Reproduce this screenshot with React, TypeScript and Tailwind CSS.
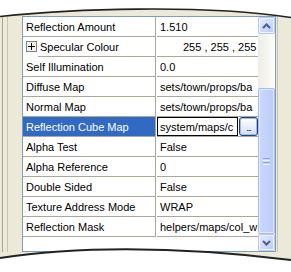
import React from "react";

const rows: { name: string; value: string; plus?: boolean; selected?: boolean; indent?: number }[] = [
  { name: "Reflection Amount", value: "1.510" },
  { name: "Specular Colour", value: "255 , 255 , 255", plus: true, indent: 15 },
  { name: "Self Illumination", value: "0.0" },
  { name: "Diffuse Map", value: "sets/town/props/ba" },
  { name: "Normal Map", value: "sets/town/props/ba" },
  { name: "Reflection Cube Map", value: "system/maps/c", selected: true },
  { name: "Alpha Test", value: "False" },
  { name: "Alpha Reference", value: "0" },
  { name: "Double Sided", value: "False" },
  { name: "Texture Address Mode", value: "WRAP" },
  { name: "Reflection Mask", value: "helpers/maps/col_w" },
];

function Row({ r }: { r: (typeof rows)[number] }) {
  return (
    <div className="flex h-[20px]">
      <div className="flex w-[133px] flex-col border-r border-[#ACA899]">
        <div
          className={
            "flex h-[19px] items-center overflow-hidden whitespace-nowrap pl-[3px] " +
            (r.selected ? "bg-[#316AC5] text-white" : "text-black")
          }
        >
          {r.plus && (
            <div className="mr-[3px] flex h-[11px] w-[11px] shrink-0 items-center justify-center border border-[#808080] bg-[#F4F2E8]">
              <svg width="9" height="9" viewBox="0 0 9 9">
                <path d="M1 4.5H8M4.5 1V8" stroke="#000" strokeWidth="1" shapeRendering="crispEdges" />
              </svg>
            </div>
          )}
          <span className="pt-[2px] leading-[17px]">{r.name}</span>
        </div>
        <div className="flex h-[1px]">
          <div className="h-[1px]" style={{ width: r.indent ?? 0 }} />
          <div className="h-[1px] flex-1 bg-[#ACA899]" />
        </div>
      </div>
      <div className="ml-[1px] flex min-w-0 flex-1 flex-col">
        {r.selected ? (
          <div className="flex h-[19px]">
            <div className="flex w-[81px] items-center overflow-hidden border border-black pl-[2px]">
              <span className="block w-full overflow-hidden whitespace-nowrap pt-[1px] leading-[17px]">{r.value}</span>
            </div>
            <div className="ml-[1px] flex h-[19px] w-[19px] items-end justify-center overflow-hidden rounded-[3px] border border-[#1F3F8C] bg-gradient-to-b from-[#FFFFFF] to-[#D3DEF4] shadow-[inset_0_0_0_1px_#9DBAE8]">
              <span className="pb-[3px] text-[9px] leading-[8px] tracking-[-1px] text-black">...</span>
            </div>
          </div>
        ) : (
          <div
            className={
              "flex h-[19px] items-center overflow-hidden whitespace-nowrap " +
              (r.plus ? "pl-[26px]" : "pl-[3px]")
            }
          >
            <span className="pt-[2px] leading-[17px]">{r.value}</span>
          </div>
        )}
        <div className="h-[1px] bg-[#ACA899]" />
      </div>
    </div>
  );
}

function Chevron({ up }: { up: boolean }) {
  return (
    <svg width="9" height="6" viewBox="0 0 9 6">
      <path
        d={up ? "M1 5L4.5 1.5L8 5" : "M1 1L4.5 4.5L8 1"}
        fill="none"
        stroke="#4D6185"
        strokeWidth="2"
      />
    </svg>
  );
}

function ScrollButton({ up }: { up: boolean }) {
  return (
    <div className="flex h-[17px] w-[17px] shrink-0 items-center justify-center rounded-[2px] border border-[#B4C8F6] bg-gradient-to-br from-[#E4ECFE] to-[#B9CBF6] shadow-[inset_0_0_0_1px_#F2F6FF]">
      <Chevron up={up} />
    </div>
  );
}

export default function App() {
  return (
    <div
      className="relative h-[272px] w-[291px] overflow-hidden bg-white text-[11px] text-black"
      style={{ fontFamily: '"Liberation Sans", Arial, sans-serif' }}
    >
      <div className="flex h-full bg-[#ECE9D8] pt-[16px] pb-[20px]">
        <div className="flex w-[22px] shrink-0">
          <div className="ml-[2px] w-[1px] bg-[#A8A596]" />
          <div className="ml-[4px] w-[1px] bg-[#C8C5B4]" />
        </div>
        <div className="flex h-[236px] w-[254px] shrink-0 border border-[#7F9DB9] bg-white">
          <div className="flex w-[235px] flex-col">
            {rows.map((r) => (
              <Row key={r.name} r={r} />
            ))}
          </div>
          <div className="flex w-[17px] flex-col bg-gradient-to-r from-[#EEEDE5] to-[#FDFDFA]">
            <ScrollButton up />
            <div className="h-[54px]" />
            <div className="flex h-[146px] items-center justify-center rounded-[2px] border border-[#A9BDF0] bg-gradient-to-r from-[#CAD8FC] to-[#BACCF8] shadow-[inset_0_0_0_1px_#E2EAFE]">
              <div className="flex flex-col gap-[1px]">
                <div className="h-[1px] w-[7px] bg-[#8CA6E8]" />
                <div className="h-[1px] w-[7px] bg-[#EEF3FF]" />
                <div className="h-[1px] w-[7px] bg-[#8CA6E8]" />
                <div className="h-[1px] w-[7px] bg-[#EEF3FF]" />
              </div>
            </div>
            <ScrollButton up={false} />
          </div>
        </div>
        <div className="flex flex-1">
          <div className="ml-[1px] w-[1px] bg-[#C8C5B4]" />
        </div>
      </div>

      <svg className="absolute left-0 top-0" width="291" height="30" viewBox="0 0 291 30">
        <path d="M0 0 L0 16.5 C70 9 200 4 291 17.5 L291 0 Z" fill="#fff" />
        <path d="M0 16.5 C70 9 200 4 291 17.5" fill="none" stroke="#222" strokeWidth="1.6" />
      </svg>
      <svg className="absolute left-0 top-[230px]" width="291" height="42" viewBox="0 230 291 42">
        <path d="M0 272 L0 258 C70 247 170 245 291 260 L291 272 Z" fill="#fff" />
        <path d="M0 258 C70 247 170 245 291 260" fill="none" stroke="#222" strokeWidth="1.8" />
      </svg>
    </div>
  );
}
